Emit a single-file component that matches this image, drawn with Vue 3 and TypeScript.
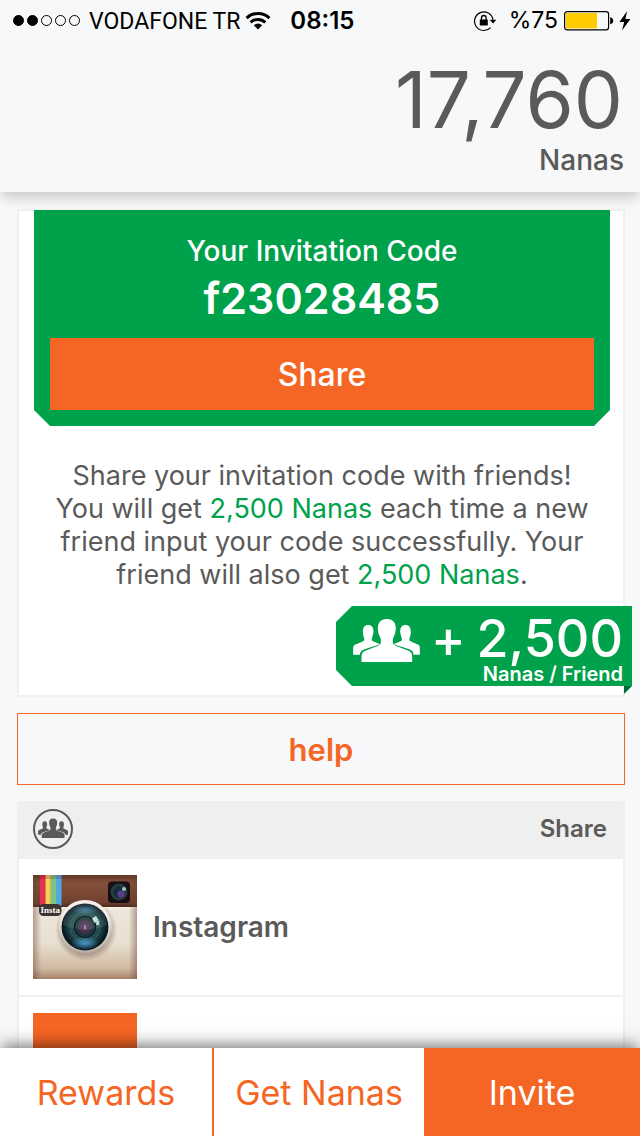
<script setup lang="ts">
interface Tab {
  label: string
  href: string
  active: boolean
}

const balance = '17,760'
const invitationCode = 'f23028485'
const reward = '2,500'
const signal: boolean[] = [true, true, false, false, false]
const tabs: Tab[] = [
  { label: 'Rewards', href: '#rewards', active: false },
  { label: 'Get Nanas', href: '#get-nanas', active: false },
  { label: 'Invite', href: '#invite', active: true },
]
</script>

<template>
  <div class="screen">
    <header class="top">
      <div class="status">
        <div class="status-left">
          <span class="signal">
            <i v-for="(on, i) in signal" :key="i" class="dot" :class="{ on }"></i>
          </span>
          <span class="carrier">VODAFONE TR</span>
          <svg class="wifi" viewBox="0 0 26 20" aria-hidden="true">
            <g fill="none" stroke="#000" stroke-width="3">
              <path d="M1.6 7.1A16.4 16.4 0 0 1 24.4 7.1" />
              <path d="M5.6 11.4A10.6 10.6 0 0 1 20.4 11.4" />
            </g>
            <path d="M13 18.6l-4.2-4.3a6 6 0 0 1 8.4 0z" />
          </svg>
          <span class="clock">08:15</span>
        </div>
        <div class="status-right">
          <svg class="lock" viewBox="0 0 24 22" aria-hidden="true">
            <path d="M20 9.6A9.3 9.3 0 1 0 17.600 17.600" fill="none" stroke="#000" stroke-width="1.2" />
            <path d="M16.600 9.8h6.800l-3.400 3.600z" />
            <rect x="6.800" y="9.600" width="8" height="6" rx=".6" />
            <path d="M8.500 10V7.8a2.300 2.300 0 0 1 4.600 0V10" fill="none" stroke="#000" stroke-width="1.3" />
          </svg>
          <span class="percent">%75</span>
          <svg class="battery" viewBox="0 0 50 20" aria-hidden="true">
            <rect x=".6" y=".6" width="44" height="18.2" rx="2.6" fill="none" stroke="#000" stroke-width="1.2" />
            <rect x="2" y="2" width="31" height="15.4" fill="#fc0" />
            <path d="M46.2 6.2q3 .6 3 3.5t-3 3.5z" />
          </svg>
          <svg class="bolt" viewBox="0 0 12 20" aria-hidden="true">
            <path d="M8.2 0L0.4 11h4.8L3 19.6 11.4 8H6.4z" />
          </svg>
        </div>
      </div>
      <div class="balance">{{ balance }}</div>
      <div class="unit">Nanas</div>
    </header>

    <main class="content">
      <section class="card">
        <div class="code-box">
          <h1 class="code-title">Your Invitation Code</h1>
          <p class="code">{{ invitationCode }}</p>
          <button type="button" class="share-button">Share</button>
        </div>
        <p class="message">
          Share your invitation code with friends!<br />
          You will get <em>{{ reward }} Nanas</em> each time a new<br />
          friend input your code successfully. Your<br />
          friend will also get <em>{{ reward }} Nanas</em>.
        </p>
        <div class="ribbon">
          <svg class="people" viewBox="0 0 200 129" aria-hidden="true">
            <use href="#people-shape" />
          </svg>
          <span class="plus">+</span>
          <div class="ribbon-text">
            <span class="amount">{{ reward }}</span>
            <span class="per">Nanas / Friend</span>
          </div>
        </div>
      </section>

      <button type="button" class="help">help</button>

      <section class="channels">
        <div class="channels-head">
          <svg class="group" viewBox="0 0 40 40" aria-hidden="true">
            <defs>
              <g id="people-shape" fill="currentColor">
                <path d="M101 0C121 0 129 13 128 31C127 47 120 54 119 62C118 72 120 77 127 80L166 95C174 98 177 104 177 113V129H25V113C25 104 28 98 36 95L75 80C82 77 84 72 83 62C82 54 75 47 74 31C73 13 81 0 101 0Z" />
                <path d="M45 18C56 18 61 26 61 38C60 49 57 53 56 59C55 65 57 66 63 68L81 76L34 91C24 95 21 99 20 107H0V88C0 80 3 78 9 76L27 68C33 66 34 64 33 58C32 53 29 48 29 38C29 26 34 18 45 18Z" />
                <path d="M157 18C146 18 141 26 141 38C142 49 145 53 146 59C147 65 145 66 139 68L121 76L168 91C178 95 180 99 181 107H200V88C200 80 198 78 192 76L175 68C169 66 168 64 169 58C170 53 173 48 173 38C173 26 168 18 157 18Z" />
              </g>
            </defs>
            <circle cx="20" cy="20" r="19" fill="none" stroke="currentColor" stroke-width="2" />
            <g transform="translate(5 9.6) scale(.15)"><use href="#people-shape" /></g>
          </svg>
          <h2 class="channels-title">Share</h2>
        </div>
        <ul class="channel-list">
          <li>
            <a class="channel" href="#instagram">
              <svg class="thumb" viewBox="0 0 104 104" aria-hidden="true">
                <defs>
                  <linearGradient id="leather" x1="0" y1="0" x2="0" y2="1">
                    <stop offset="0" stop-color="#5f3828" />
                    <stop offset=".25" stop-color="#84503a" />
                    <stop offset=".85" stop-color="#714130" />
                    <stop offset="1" stop-color="#4a281c" />
                  </linearGradient>
                  <linearGradient id="body" x1="0" y1="0" x2="0" y2="1">
                    <stop offset="0" stop-color="#f2ece2" />
                    <stop offset=".65" stop-color="#e9e0d2" />
                    <stop offset=".9" stop-color="#d0b9a2" />
                    <stop offset="1" stop-color="#a88268" />
                  </linearGradient>
                  <linearGradient id="edge">
                    <stop offset="0" stop-color="#68402e" stop-opacity=".45" />
                    <stop offset=".08" stop-color="#68402e" stop-opacity="0" />
                    <stop offset=".92" stop-color="#68402e" stop-opacity="0" />
                    <stop offset="1" stop-color="#68402e" stop-opacity=".45" />
                  </linearGradient>
                  <radialGradient id="rim" cx=".5" cy=".4" r=".6">
                    <stop offset=".7" stop-color="#f4efe8" />
                    <stop offset="1" stop-color="#a99c8e" />
                  </radialGradient>
                  <radialGradient id="glass">
                    <stop offset="0" stop-color="#60415d" />
                    <stop offset=".25" stop-color="#432f4c" />
                    <stop offset=".38" stop-color="#17333a" />
                    <stop offset=".5" stop-color="#28504f" />
                    <stop offset=".75" stop-color="#173c43" />
                    <stop offset="1" stop-color="#06141e" />
                  </radialGradient>
                  <radialGradient id="glow">
                    <stop offset="0" stop-color="#4fa2dc" stop-opacity=".9" />
                    <stop offset="1" stop-color="#4fa2dc" stop-opacity="0" />
                  </radialGradient>
                  <radialGradient id="shade">
                    <stop offset=".6" stop-color="#4b3527" stop-opacity=".6" />
                    <stop offset="1" stop-color="#4b3527" stop-opacity="0" />
                  </radialGradient>
                </defs>
                <rect width="104" height="104" fill="url(#body)" />
                <rect width="104" height="32" fill="url(#leather)" />
                <rect y="32" width="104" height="1.5" fill="#faf5ea" opacity=".8" />
                <rect width="104" height="104" fill="url(#edge)" />
                <g>
                  <path d="M7 0h5.5v31H7z" fill="#e62e50" />
                  <path d="M12.500 0h5.300v31h-5.300z" fill="#f5ce58" />
                  <path d="M17.800 0h5.200v31h-5.200z" fill="#7bc681" />
                  <path d="M23 0h5.500v31H23z" fill="#50a9e4" />
                  <path d="M7 0h21.500v4H7z" fill="#402" opacity=".2" />
                </g>
                <rect x="6" y="29" width="22.500" height="12" rx="4.500" fill="#3d3432" />
                <text x="17.200" y="38" text-anchor="middle" class="insta-mark">Insta</text>
                <rect x="75" y="6.500" width="22" height="21.500" rx="4" fill="#170f13" />
                <circle cx="86" cy="17" r="8.500" fill="#253c43" />
                <circle cx="86" cy="17" r="5.500" fill="#172c3b" />
                <circle cx="88" cy="19" r="3.500" fill="#6a43a0" opacity=".8" />
                <circle cx="91" cy="14" r="2" fill="#b0e4d2" opacity=".85" />
                <circle cx="53" cy="55" r="31" fill="url(#shade)" />
                <circle cx="52" cy="52" r="27" fill="url(#rim)" />
                <circle cx="52" cy="52" r="23.500" fill="#111b23" />
                <circle cx="52" cy="52" r="22.500" fill="url(#glass)" />
                <ellipse cx="52" cy="68" rx="14" ry="7" fill="url(#glow)" />
                <ellipse cx="52" cy="35" rx="13" ry="5" fill="url(#glow)" opacity=".6" />
                <path d="M30 50a22 22 0 0 1 44 0q-20 9-44 0z" fill="#d3ebdf" opacity=".12" />
                <circle cx="52" cy="52" r="10.500" fill="none" stroke="#0a1920" stroke-width="1.200" />
                <circle cx="52" cy="52" r="15" fill="none" stroke="#578d84" stroke-width=".8" opacity=".5" />
                <path d="M51.300 50h1.600v4.500h-1.600z" fill="#ad91cd" />
                <path d="M59 43.500l4-2.500 2.500 4-4 3zM63.500 46.500l3-1-1 5-2.500-1z" fill="#dff3ec" opacity=".9" />
              </svg>
              <span class="channel-name">Instagram</span>
            </a>
          </li>
          <li>
            <a class="channel" href="#more" aria-label="More"><span class="thumb tile"></span></a>
          </li>
        </ul>
      </section>
    </main>

    <nav class="tabs">
      <a
        v-for="tab in tabs"
        :key="tab.label"
        class="tab"
        :class="{ active: tab.active }"
        :href="tab.href"
        :aria-current="tab.active ? 'page' : undefined"
      >{{ tab.label }}</a>
    </nav>
  </div>
</template>

<style>
body {
  margin: 0;
  background: #f7f8fa;
}
</style>

<style scoped>
.screen {
  display: flex;
  flex-direction: column;
  height: 100vh;
  overflow: hidden;
  background: #f7f8fa;
  color: #5a5a5a;
  font-family: Inter, "Liberation Sans", sans-serif;
}
.screen * {
  box-sizing: border-box;
}
h1,
h2,
p,
ul {
  margin: 0;
  padding: 0;
}
a {
  color: inherit;
  text-decoration: none;
}
button {
  display: block;
  width: 100%;
  margin: 0;
  padding: 0;
  font-family: inherit;
  cursor: pointer;
}
.top {
  position: relative;
  z-index: 1;
  flex: none;
  padding-bottom: 16px;
  background: #f7f8fa;
  box-shadow: 0 8px 12px -2px rgba(0, 0, 0, 0.18);
  text-align: right;
}
.status {
  display: flex;
  align-items: center;
  justify-content: space-between;
  height: 41px;
  padding: 0 9px 0 13px;
  color: #000;
  font-size: 23px;
  line-height: 41px;
}
.status-left,
.status-right {
  display: flex;
  align-items: center;
}
.signal {
  display: flex;
  gap: 3px;
  margin-right: 9px;
}
.dot {
  width: 11px;
  height: 11px;
  border: 1px solid #000;
  border-radius: 50%;
}
.dot.on {
  background: #000;
}
.carrier {
  padding-top: 2px;
  font-family: Roboto, "Liberation Sans", sans-serif;
}
.wifi {
  width: 26px;
  height: 20px;
  margin-left: 5px;
}
.clock {
  margin-left: 19px;
  font-size: 24px;
  font-weight: 600;
}
.lock {
  width: 24px;
  height: 22px;
  margin-right: 12px;
}
.battery {
  width: 50px;
  height: 20px;
  margin: 0 5px 0 6px;
}
.bolt {
  width: 12px;
  height: 20px;
}
.balance {
  margin-top: 15px;
  padding-right: 17px;
  font-size: 78px;
  line-height: 88px;
}
.unit {
  padding-right: 16px;
  font-size: 28px;
  line-height: 32px;
  font-weight: 500;
}
.content {
  flex: 1;
  min-height: 0;
  overflow: hidden;
  padding: 17px 15px 0 17px;
}
.card {
  position: relative;
  height: 488px;
  padding: 0 13px 0 15px;
  border: 2px solid #f0f0f0;
  background: #fff;
}
.code-box {
  margin-top: -1px;
  padding: 24px 16px 16px;
  background: #00a14b;
  color: #fff;
  text-align: center;
  clip-path: polygon(0 0, 100% 0, 100% calc(100% - 16px), calc(100% - 16px) 100%, 16px 100%, 0 calc(100% - 16px));
}
.code-title {
  font-size: 28px;
  line-height: 34px;
  font-weight: 500;
}
.code {
  margin-bottom: 10px;
  font-size: 43px;
  line-height: 60px;
  font-weight: 600;
}
.share-button {
  height: 72px;
  border: 0;
  background: #f56523;
  color: #fff;
  font-size: 32px;
  font-weight: 500;
}
.message {
  margin-top: 33px;
  font-size: 27px;
  line-height: 33px;
  text-align: center;
  white-space: nowrap;
}
.message em {
  color: #00a14b;
  font-style: normal;
}
.ribbon {
  position: absolute;
  right: -9px;
  bottom: 9px;
  display: flex;
  width: 296px;
  height: 80px;
  padding: 0 9px 0 17px;
  color: #fff;
  background: #00a14b;
  clip-path: polygon(16px 0, 100% 0, 100% 100%, 16px 100%, 0 calc(100% - 16px), 0 16px);
}
.card::after {
  content: "";
  position: absolute;
  right: -9px;
  bottom: 1px;
  width: 8px;
  height: 8px;
  background: #006b36;
  clip-path: polygon(0 0, 100% 0, 0 100%);
}
.people {
  width: 67px;
  height: 43px;
  margin-top: 13px;
}
.plus {
  margin-left: 11px;
  font-size: 52px;
  line-height: 66px;
  font-weight: 500;
}
.ribbon-text {
  display: flex;
  flex: 1;
  flex-direction: column;
  align-items: flex-end;
}
.amount {
  font-size: 52px;
  line-height: 66px;
  height: 56px;
  font-weight: 500;
}
.per {
  font-size: 20px;
  line-height: 24px;
  font-weight: 600;
}
.help {
  height: 72px;
  margin-top: 16px;
  border: 1px solid #f56523;
  background: transparent;
  color: #f56523;
  font-size: 31px;
  font-weight: 600;
}
.channels {
  margin-top: 16px;
  border: 2px solid #f0f0f0;
  border-top: 0;
  background: #fff;
}
.channels-head {
  display: flex;
  align-items: center;
  justify-content: space-between;
  height: 58px;
  padding: 0 16px 2px 14px;
  background: #efefef;
}
.group {
  width: 40px;
  height: 40px;
}
.channels-title {
  font-size: 24px;
  line-height: 32px;
  font-weight: 600;
}
.channel-list {
  list-style: none;
}
.channel {
  display: flex;
  align-items: center;
  gap: 16px;
  padding: 16px 14px;
  border-bottom: 2px solid #f0f0f0;
}
.thumb {
  display: block;
  width: 104px;
  height: 104px;
}
.tile {
  background: #f56523;
}
.insta-mark {
  fill: #fff;
  font: 700 9px "Liberation Serif", serif;
}
.channel-name {
  font-size: 28px;
  line-height: 34px;
  font-weight: 600;
}
.tabs {
  position: relative;
  z-index: 1;
  display: grid;
  grid-template-columns: 214fr 210fr 216fr;
  flex: none;
  height: 88px;
  background: #fff;
  box-shadow: 0 -4px 16px -2px rgba(0, 0, 0, 0.6);
}
.tab {
  display: flex;
  align-items: center;
  justify-content: center;
  color: #f56523;
  font-size: 34px;
}
.tab:first-child {
  border-right: 2px solid #f56523;
}
.tab.active {
  background: #f56523;
  color: #fff;
}
</style>
